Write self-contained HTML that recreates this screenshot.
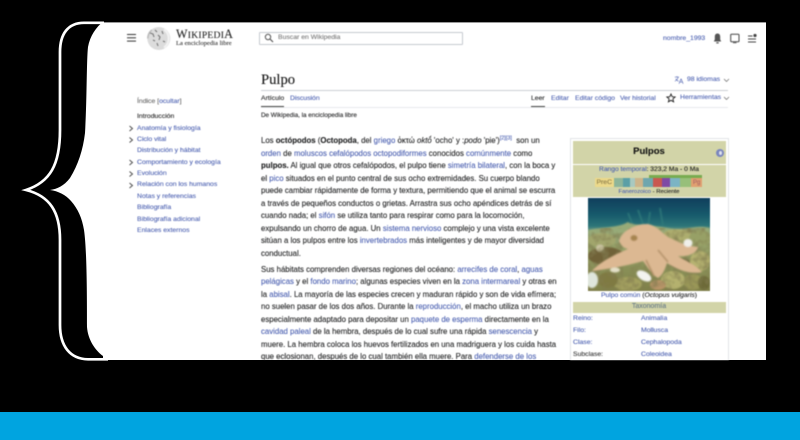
<!DOCTYPE html>
<html><head><meta charset="utf-8"><style>
html,body{margin:0;padding:0;background:#000;}
#p{position:relative;width:800px;height:440px;overflow:hidden;background:#000;font-family:"Liberation Sans",sans-serif;}
#w{position:absolute;left:0;top:21.5px;width:766px;height:338.5px;background:#fff;overflow:hidden;border-top:1px solid #999;box-sizing:border-box}
#c{position:absolute;left:0;top:0;width:800px;height:360px;overflow:hidden;filter:blur(.45px);}
.t{position:absolute;white-space:nowrap;color:#202122;font-size:7.8px;line-height:10px;-webkit-text-stroke:.1px currentColor;}
a{color:#4a5fb0;text-decoration:none}
b{font-weight:bold}
.s{font-size:6.85px}
.s2{font-size:6.6px}
</style></head><body><div id="p">
<div id="w"></div>
<div id="c">
<!-- header -->
<div style="position:absolute;left:126.500px;top:34px;width:9px;height:1.300px;background:#333;box-shadow:0 3.300px 0 #333,0 6.600px 0 #333"></div>
<svg style="position:absolute;left:146px;top:26px" width="26" height="25" viewBox="0 0 26 25"><circle cx="12.800" cy="12.500" r="11.500" fill="#dcdcdc"/><path d="M1.800 12.500a11 11 0 0 1 4-8.500" stroke="#bbb" fill="none" stroke-width="1.500"/><path d="M4 7l3 1 1 3M9 4l2 2M7 14l2 1M12 9l2 2-1 3M16 5l1 3M11 17l1 3M17 15l2 1" stroke="#777" stroke-width="1.100" fill="none"/><path d="M18 3.500a11 11 0 0 1 0 18" stroke="#f2f2f2" stroke-width="2" fill="none"/></svg>
<div class="t" style="left:176px;top:27px;font-family:'Liberation Serif',serif;font-size:12.200px;line-height:14px;letter-spacing:.25px;color:#222">W<span style="font-size:9.600px">IKIPEDI</span>A</div>
<div class="t" style="left:176px;top:39px;font-family:'Liberation Serif',serif;font-size:6.600px;color:#333">La enciclopedia libre</div>
<div style="position:absolute;left:259px;top:32px;width:203.500px;height:12.500px;border:1px solid #c6cad0;box-sizing:border-box;border-radius:1px"></div>
<svg style="position:absolute;left:263.500px;top:33px" width="10" height="10" viewBox="0 0 10 10"><circle cx="4" cy="4" r="2.700" fill="none" stroke="#555" stroke-width="1"/><path d="M6 6l3 3" stroke="#555" stroke-width="1.200"/></svg>
<div class="t s" style="left:278px;top:33px;color:#777">Buscar en Wikipedia</div>
<div class="t s" style="left:663px;top:33.500px"><a>nombre_1993</a></div>
<svg style="position:absolute;left:712px;top:32px" width="56" height="13" viewBox="0 0 56 13"><path d="M5.500 1.500c-2 0-2.700 1.500-2.700 3.200v2.800L1.800 9.500h7.400L8.200 7.500V4.700c0-1.700-.7-3.200-2.700-3.200zM4.300 10.300h2.400v1.200H4.300z" fill="#555"/><rect x="18.700" y="2.200" width="8.300" height="7.500" rx=".8" fill="none" stroke="#444" stroke-width="1"/><path d="M21 10.700h3.500" stroke="#555"/><path d="M36 4h4.500M36 7h8M36 10h8" stroke="#444" stroke-width="1"/><circle cx="43" cy="3.500" r="1.600" fill="#444"/></svg>
<!-- title -->
<div class="t" style="left:261px;top:71px;font-family:'Liberation Serif',serif;font-size:14.600px;line-height:18px;color:#111">Pulpo</div>
<div style="position:absolute;left:261px;top:89.500px;width:467px;height:1px;background:#ccd0d5"></div>
<svg style="position:absolute;left:674px;top:75px" width="10" height="10" viewBox="0 0 12 11"><path d="M1 2h5M3.500 1v1M5 2C4.500 4.500 3 6 1 7M2 4c.7 1.300 2 2.500 3.500 3M8.500 4L6 10M8.500 4l2.500 6M7 8h3" stroke="#5a6cb5" stroke-width=".8" fill="none"/></svg>
<div class="t s" style="left:687px;top:75px"><a>98 idiomas</a></div>
<svg style="position:absolute;left:723px;top:78px" width="7" height="5"><path d="M1 1l2.500 2.500L6 1" stroke="#666" stroke-width=".7" fill="none"/></svg>
<div class="t s" style="left:261px;top:94px;color:#202122">Artículo</div>
<div class="t s" style="left:290px;top:94px"><a>Discusión</a></div>
<div style="position:absolute;left:261px;top:106px;width:23px;height:.8px;background:#444"></div>
<div style="position:absolute;left:261px;top:106.500px;width:467px;height:.5px;background:#e8eaec"></div>
<div class="t s" style="left:531px;top:94px">Leer</div>
<div style="position:absolute;left:531px;top:106px;width:14px;height:.8px;background:#444"></div>
<div class="t s" style="left:551px;top:94px"><a>Editar</a></div>
<div class="t s" style="left:575px;top:94px"><a>Editar código</a></div>
<div class="t s" style="left:620px;top:94px"><a>Ver historial</a></div>
<svg style="position:absolute;left:666px;top:93px" width="10" height="10" viewBox="0 0 10 10"><path d="M5 1l1.200 2.700 2.900.3-2.200 1.900.7 2.900L5 7.300 2.400 8.800l.7-2.900L.9 4l2.900-.3z" fill="none" stroke="#222" stroke-width=".9"/></svg>
<div class="t s" style="left:680px;top:93px"><a>Herramientas</a></div>
<svg style="position:absolute;left:723px;top:96px" width="7" height="5"><path d="M1 1l2.500 2.500L6 1" stroke="#666" stroke-width=".7" fill="none"/></svg>
<div class="t s2" style="left:261px;top:111px;color:#202122;font-size:6.300px">De Wikipedia, la enciclopedia libre</div>
<!-- TOC -->
<div class="t s" style="left:137px;top:97px;color:#666">Índice [<a>ocultar</a>]</div>
<div class="t s" style="left:137px;top:112px;color:#222">Introducción</div>
<div class="t s" style="left:137px;top:123.500px"><a>Anatomía y fisiología</a></div>
<div class="t s" style="left:137px;top:135px"><a>Ciclo vital</a></div>
<div class="t s" style="left:137px;top:146px"><a>Distribución y hábitat</a></div>
<div class="t s" style="left:137px;top:157.500px"><a>Comportamiento y ecología</a></div>
<div class="t s" style="left:137px;top:169px"><a>Evolución</a></div>
<div class="t s" style="left:137px;top:180px"><a>Relación con los humanos</a></div>
<div class="t s" style="left:137px;top:191.500px"><a>Notas y referencias</a></div>
<div class="t s" style="left:137px;top:203px"><a>Bibliografía</a></div>
<div class="t s" style="left:137px;top:214.500px"><a>Bibliografía adicional</a></div>
<div class="t s" style="left:137px;top:226px"><a>Enlaces externos</a></div>
<svg style="position:absolute;left:128px;top:120px" width="8" height="70"><path d="M1.500 6l3 2.500-3 2.500M1.500 17.500l3 2.500-3 2.500M1.500 40l3 2.500-3 2.500M1.500 51.500l3 2.500-3 2.500M1.500 63l3 2.500-3 2.500" stroke="#444" stroke-width=".9" fill="none"/></svg>
<!-- body -->
<div class="t" style="left:261px;top:136px">Los <b>octópodos</b> (<b>Octopoda</b>, del <a>griego</a> ὀκτώ <i>oktṓ</i> 'ocho' y :<i>podo</i> 'pie')<sup style="font-size:5.500px;line-height:0"><a>[2][3]</a></sup>&nbsp; son un</div>
<div class="t" style="left:261px;top:148.500px"><a>orden</a> de <a>moluscos cefalópodos octopodiformes</a> conocidos <a>comúnmente</a> como</div>
<div class="t" style="left:261px;top:161px"><b>pulpos.</b> Al igual que otros cefalópodos, el pulpo tiene <a>simetría bilateral</a>, con la boca y</div>
<div class="t" style="left:261px;top:173.500px">el <a>pico</a> situados en el punto central de sus ocho extremidades. Su cuerpo blando</div>
<div class="t" style="left:261px;top:186px">puede cambiar rápidamente de forma y textura, permitiendo que el animal se escurra</div>
<div class="t" style="left:261px;top:198.500px">a través de pequeños conductos o grietas. Arrastra sus ocho apéndices detrás de sí</div>
<div class="t" style="left:261px;top:211px">cuando nada; el <a>sifón</a> se utiliza tanto para respirar como para la locomoción,</div>
<div class="t" style="left:261px;top:223.500px">expulsando un chorro de agua. Un <a>sistema nervioso</a> complejo y una vista excelente</div>
<div class="t" style="left:261px;top:236px">sitúan a los pulpos entre los <a>invertebrados</a> más inteligentes y de mayor diversidad</div>
<div class="t" style="left:261px;top:248.500px">conductual.</div>
<div class="t" style="left:261px;top:264.500px">Sus hábitats comprenden diversas regiones del océano: <a>arrecifes de coral</a>, <a>aguas</a></div>
<div class="t" style="left:261px;top:277px"><a>pelágicas</a> y el <a>fondo marino</a>; algunas especies viven en la <a>zona intermareal</a> y otras en</div>
<div class="t" style="left:261px;top:289.500px">la <a>abisal</a>. La mayoría de las especies crecen y maduran rápido y son de vida efímera;</div>
<div class="t" style="left:261px;top:302px">no suelen pasar de los dos años. Durante la <a>reproducción</a>, el macho utiliza un brazo</div>
<div class="t" style="left:261px;top:314.500px">especialmente adaptado para depositar un <a>paquete de esperma</a> directamente en la</div>
<div class="t" style="left:261px;top:327px"><a>cavidad paleal</a> de la hembra, después de lo cual sufre una rápida <a>senescencia</a> y</div>
<div class="t" style="left:261px;top:339.500px">muere. La hembra coloca los huevos fertilizados en una madriguera y los cuida hasta</div>
<div class="t" style="left:261px;top:352px">que eclosionan, después de lo cual también ella muere. Para <a>defenderse de los</a></div>
<!-- infobox -->
<div style="position:absolute;left:569.500px;top:137.500px;width:159px;height:230px;border:1px solid #e2e4e7;box-sizing:border-box;background:#fff"></div>
<div style="position:absolute;left:572.500px;top:141px;width:153px;height:23px;background:#d2d4a8"></div>
<div style="position:absolute;left:572.500px;top:165px;width:153px;height:32px;background:#d2d4a8"></div>
<div class="t" style="left:572.500px;top:146px;width:153px;text-align:center;font-size:9.500px;font-weight:bold;line-height:11px;color:#111">Pulpos</div>
<div style="position:absolute;left:716px;top:149px;width:8px;height:8px;border-radius:50%;background:#7a86bd"></div>
<div style="position:absolute;left:718.500px;top:151px;width:3px;height:4px;border-radius:50%;background:#dfe2ee"></div>
<div class="t s2" style="left:572.500px;top:165px;width:153px;text-align:center;font-size:6.700px"><a>Rango temporal</a>: 323,2 Ma - 0 Ma</div>
<svg style="position:absolute;left:595px;top:175px" width="108" height="13" viewBox="0 0 108 13"><rect x="0" y="3" width="19" height="9" fill="#ecd98a"/><rect x="19" y="3" width="9" height="9" fill="#8db59a"/><rect x="28" y="3" width="7" height="9" fill="#5b9fa6"/><rect x="35" y="3" width="5" height="9" fill="#a9c9c0"/><rect x="40" y="3" width="8" height="9" fill="#cdb48a"/><rect x="48" y="3" width="10" height="9" fill="#6ea6ae"/><rect x="58" y="3" width="9" height="9" fill="#c95850"/><rect x="67" y="3" width="8" height="9" fill="#7f4aa5"/><rect x="75" y="3" width="10" height="9" fill="#7cb4c4"/><rect x="85" y="3" width="11" height="9" fill="#97bf7a"/><rect x="96" y="3" width="11" height="9" fill="#e0a070"/><rect x="54" y="0" width="53" height="3" fill="#78ac50"/></svg>
<div class="t" style="left:596.500px;top:177.500px;font-size:6.800px;color:#8a7a48">PreC</div>
<div class="t" style="left:693px;top:178px;font-size:6px;color:#a66">Pg</div>
<div class="t s2" style="left:572.500px;top:187px;width:153px;text-align:center;font-size:5.900px"><a>Fanerozoico</a> - Reciente</div>
<!-- image -->
<svg style="position:absolute;left:588px;top:198px" width="122" height="93" viewBox="0 0 122 93"><defs><linearGradient id="a" x1="0" y1="0" x2="0" y2="1"><stop offset="0" stop-color="#103f5c"/><stop offset=".18" stop-color="#175a6c"/><stop offset=".3" stop-color="#2d7578"/><stop offset=".36" stop-color="#6d9a84"/><stop offset=".42" stop-color="#98a66e"/><stop offset="1" stop-color="#7f8048"/></linearGradient><filter id="f"><feGaussianBlur stdDeviation=".8"/></filter><filter id="n" x="0" y="0" width="100%" height="100%"><feTurbulence type="fractalNoise" baseFrequency=".14" numOctaves="2" seed="4"/><feColorMatrix values="0 0 0 0 .22 0 0 0 0 .2 0 0 0 0 .08 1.800 0 0 0 -.7"/></filter></defs><rect width="122" height="93" fill="url(#a)"/><g filter="url(#f)"><path d="M40 15l6 15M50 12l6 17M62 14l-2 15M72 10l3 18" stroke="#2f7a7a" stroke-width="1.500" fill="none"/><path d="M0 32C15 29 30 30 40 24C44 28 60 26 80 30S105 26 122 30V45H0z" fill="#97aa78"/>
<ellipse cx="14" cy="42" rx="14" ry="7" fill="#a1a56c"/><ellipse cx="90" cy="38" rx="16" ry="7" fill="#adad6e"/><ellipse cx="112" cy="40" rx="11" ry="8" fill="#97a066"/><ellipse cx="18" cy="58" rx="18" ry="9" fill="#6f6238"/><ellipse cx="12" cy="50" rx="4" ry="3.500" fill="#c9c2a0"/><ellipse cx="112" cy="63" rx="10" ry="10" fill="#b5b270"/><ellipse cx="85" cy="82" rx="12" ry="9" fill="#b4b16e"/><ellipse cx="105" cy="84" rx="9" ry="8" fill="#9c9a58"/><ellipse cx="40" cy="86" rx="14" ry="7" fill="#a3a05e"/><ellipse cx="20" cy="82" rx="10" ry="8" fill="#7f7a42"/><ellipse cx="70" cy="87" rx="8" ry="5" fill="#b89468"/><ellipse cx="116" cy="85" rx="6" ry="7" fill="#6d6a38"/><ellipse cx="92" cy="65" rx="10" ry="5" fill="#5f5a32"/></g>
<rect y="30" width="122" height="63" filter="url(#n)"/>
<g filter="url(#f)"><path d="M31 43C34 32 48 26 60 26C69 28 74 35 80 39C90 44 99 48 110 49C108 57 97 59 90 58C98 63 108 67 114 74C102 77 88 71 79 65C77 71 75 77 70 80C63 76 59 68 55 63C42 67 22 71 4 73C13 63 30 55 40 51C35 50 33 47 31 43Z" fill="#dcb892"/><ellipse cx="46" cy="40" rx="3.500" ry="3" fill="#a5844f"/><path d="M58 62l8 16M70 52l10 12" stroke="#b08f66" stroke-width="1.500" fill="none"/><ellipse cx="56" cy="78" rx="8" ry="4.500" fill="#f3f3ef" transform="rotate(30 56 78)"/><ellipse cx="100" cy="45" rx="4.500" ry="4" fill="#f0f0ea"/><ellipse cx="27" cy="72" rx="5" ry="2.500" fill="#e4e0c8"/><ellipse cx="4" cy="82" rx="6" ry="8" fill="#dfe6dc"/></g></svg>
<div class="t s2" style="left:572.500px;top:291px;width:153px;text-align:center;font-size:6.750px"><a>Pulpo común</a> (<i>Octopus vulgaris</i>)</div>
<div style="position:absolute;left:572.500px;top:302px;width:153px;height:11px;background:#d2d4a8"></div>
<div class="t s2" style="left:572.500px;top:302px;width:153px;text-align:center;font-size:7px;color:#667a88">Taxonomía</div>
<div class="t s" style="left:573px;top:314px"><a>Reino:</a></div><div class="t s" style="left:641px;top:314px"><a>Animalia</a></div>
<div class="t s" style="left:573px;top:326px"><a>Filo:</a></div><div class="t s" style="left:641px;top:326px"><a>Mollusca</a></div>
<div class="t s" style="left:573px;top:338px"><a>Clase:</a></div><div class="t s" style="left:641px;top:338px"><a>Cephalopoda</a></div>
<div class="t s" style="left:573px;top:350px;color:#333">Subclase:</div><div class="t s" style="left:641px;top:350px"><a>Coleoidea</a></div>
</div>
<!-- brace -->
<svg style="position:absolute;left:0;top:0;filter:blur(.3px)" width="120" height="370" viewBox="0 0 120 370">
<path d="M0 0H120V21H104C96 27 90 36 88 47C86.500 60 87 100 85 133C83 150 78 165 70 178C64 186 57 189 50 190C58 191 66 195 71 201C78 209 82 218 84 230C87 250 87 300 87 327C88 340 95 350 103 356V361H0Z" fill="#000"/>
<path d="M104 22.800H84C68 22.800 60 34 60 52V130C60 165 50 182 26 190C50 196 60 212 60 240V325C60 346 70 359 88 359.300H108" fill="none" stroke="#fff" stroke-width="2.700"/>
</svg>
<div style="position:absolute;left:0;top:412px;width:800px;height:28px;background:#00a4e0"></div>
</div></body></html>
